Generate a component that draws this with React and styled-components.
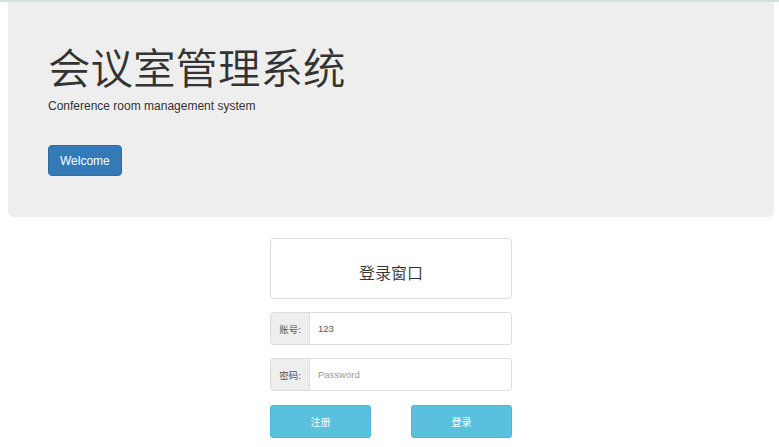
import React from "react";
import styled, { createGlobalStyle } from "styled-components";

const GlobalStyle = createGlobalStyle`
  body {
    margin: 0;
    background: #fff;
    font-family: "Liberation Sans", Arial, "Noto Sans CJK SC", sans-serif;
    color: #333;
  }
`;

const TopLine = styled.div`
  height: 2px;
  background: #d4e0de;
`;

const Jumbotron = styled.header`
  margin: 0 5px 0 8px;
  height: 215px;
  box-sizing: border-box;
  padding: 41px 40px 0 40px;
  background: #eee;
  border-radius: 2px 2px 6px 6px;
`;

const Title = styled.h1`
  margin: 0;
  font-family: "Noto Sans CJK SC", "Liberation Sans", sans-serif;
  font-weight: 350;
  font-size: 42.5px;
  line-height: 46px;
  color: #333;
`;

const Subtitle = styled.p`
  margin: 9px 0 0;
  font-size: 12px;
  line-height: 16px;
  color: #333;
`;

const PrimaryButton = styled.button`
  margin-top: 31px;
  height: 31px;
  padding: 0 11px;
  border: 1px solid #2e6da4;
  border-radius: 4px;
  background: #337ab7;
  color: #fff;
  font-family: "Liberation Sans", Arial, sans-serif;
  font-size: 12px;
  cursor: pointer;
`;

const LoginWrap = styled.main`
  margin: 21px 5px 0 8px;
  display: flex;
  justify-content: center;
`;

const LoginPanel = styled.div`
  width: 242px;
  display: flex;
  flex-direction: column;
  gap: 13px;
`;

const TitleBox = styled.div`
  height: 61px;
  box-sizing: border-box;
  border: 1px solid #ddd;
  border-radius: 4px;
  display: flex;
  align-items: center;
  justify-content: center;
  padding-top: 6px;
  font-family: "Noto Sans CJK SC", sans-serif;
  font-weight: 350;
  font-size: 16px;
  color: #333;
`;

const InputGroup = styled.div`
  height: 33px;
  display: flex;
  box-sizing: border-box;
  border: 1px solid #ddd;
  border-radius: 3px;
  overflow: hidden;
`;

const Addon = styled.span`
  width: 38px;
  flex: none;
  display: flex;
  align-items: center;
  justify-content: center;
  background: #eee;
  border-right: 1px solid #ddd;
  font-family: "Noto Sans CJK SC", sans-serif;
  font-size: 9.5px;
  color: #555;
`;

const Field = styled.input`
  flex: 1;
  min-width: 0;
  border: none;
  outline: none;
  padding: 0 8px;
  font-family: "Liberation Sans", Arial, sans-serif;
  font-size: 9.5px;
  color: #555;
  background: #fff;
  &::placeholder {
    color: #999;
  }
`;

const ButtonRow = styled.div`
  margin-top: 1px;
  display: flex;
  justify-content: space-between;
`;

const InfoButton = styled.button`
  width: 101px;
  height: 33px;
  border: 1px solid #46b8da;
  border-radius: 3px;
  background: #5bc0de;
  color: #fff;
  font-family: "Noto Sans CJK SC", sans-serif;
  font-size: 10px;
  cursor: pointer;
`;

export default function App() {
  return (
    <>
      <GlobalStyle />
      <TopLine />
      <Jumbotron>
        <Title>会议室管理系统</Title>
        <Subtitle>Conference room management system</Subtitle>
        <PrimaryButton>Welcome</PrimaryButton>
      </Jumbotron>
      <LoginWrap>
        <LoginPanel>
          <TitleBox>登录窗口</TitleBox>
          <InputGroup>
            <Addon>账号:</Addon>
            <Field type="text" defaultValue="123" />
          </InputGroup>
          <InputGroup>
            <Addon>密码:</Addon>
            <Field type="password" placeholder="Password" />
          </InputGroup>
          <ButtonRow>
            <InfoButton>注册</InfoButton>
            <InfoButton>登录</InfoButton>
          </ButtonRow>
        </LoginPanel>
      </LoginWrap>
    </>
  );
}
